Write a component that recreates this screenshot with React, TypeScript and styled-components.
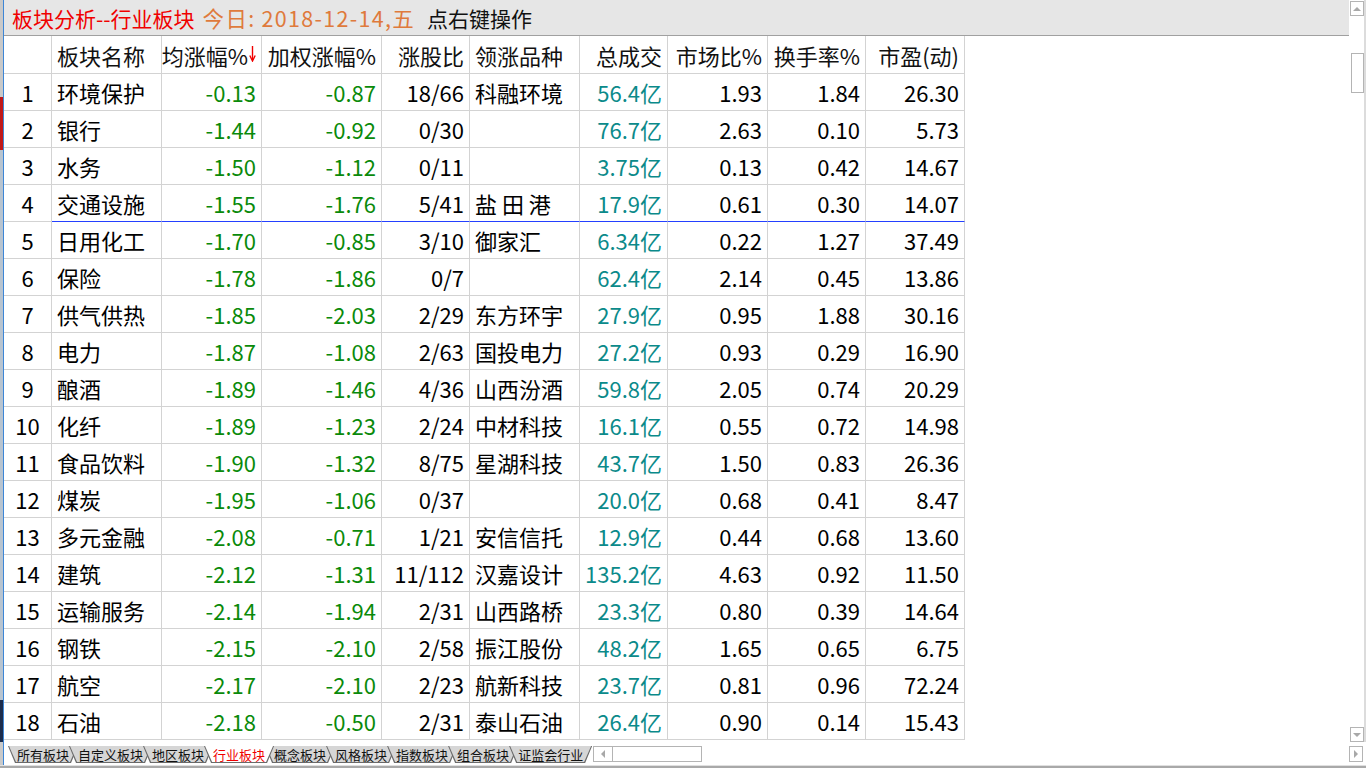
import React from "react"
import styled, { createGlobalStyle } from "styled-components"

const Global = createGlobalStyle`
  html, body { margin: 0; padding: 0; background: #fff; }
  body { font-family: "Noto Sans CJK SC", "Noto Sans", sans-serif; }
`

const COLS = "48px 110px 100px 120px 88px 110px 88px 100px 98px 99px"

const rows: string[][] = [
  ["1", "环境保护", "-0.13", "-0.87", "18/66", "科融环境", "56.4亿", "1.93", "1.84", "26.30"],
  ["2", "银行", "-1.44", "-0.92", "0/30", "", "76.7亿", "2.63", "0.10", "5.73"],
  ["3", "水务", "-1.50", "-1.12", "0/11", "", "3.75亿", "0.13", "0.42", "14.67"],
  ["4", "交通设施", "-1.55", "-1.76", "5/41", "盐 田 港", "17.9亿", "0.61", "0.30", "14.07"],
  ["5", "日用化工", "-1.70", "-0.85", "3/10", "御家汇", "6.34亿", "0.22", "1.27", "37.49"],
  ["6", "保险", "-1.78", "-1.86", "0/7", "", "62.4亿", "2.14", "0.45", "13.86"],
  ["7", "供气供热", "-1.85", "-2.03", "2/29", "东方环宇", "27.9亿", "0.95", "1.88", "30.16"],
  ["8", "电力", "-1.87", "-1.08", "2/63", "国投电力", "27.2亿", "0.93", "0.29", "16.90"],
  ["9", "酿酒", "-1.89", "-1.46", "4/36", "山西汾酒", "59.8亿", "2.05", "0.74", "20.29"],
  ["10", "化纤", "-1.89", "-1.23", "2/24", "中材科技", "16.1亿", "0.55", "0.72", "14.98"],
  ["11", "食品饮料", "-1.90", "-1.32", "8/75", "星湖科技", "43.7亿", "1.50", "0.83", "26.36"],
  ["12", "煤炭", "-1.95", "-1.06", "0/37", "", "20.0亿", "0.68", "0.41", "8.47"],
  ["13", "多元金融", "-2.08", "-0.71", "1/21", "安信信托", "12.9亿", "0.44", "0.68", "13.60"],
  ["14", "建筑", "-2.12", "-1.31", "11/112", "汉嘉设计", "135.2亿", "4.63", "0.92", "11.50"],
  ["15", "运输服务", "-2.14", "-1.94", "2/31", "山西路桥", "23.3亿", "0.80", "0.39", "14.64"],
  ["16", "钢铁", "-2.15", "-2.10", "2/58", "振江股份", "48.2亿", "1.65", "0.65", "6.75"],
  ["17", "航空", "-2.17", "-2.10", "2/23", "航新科技", "23.7亿", "0.81", "0.96", "72.24"],
  ["18", "石油", "-2.18", "-0.50", "2/31", "泰山石油", "26.4亿", "0.90", "0.14", "15.43"],
]

const headers = ["", "板块名称", "均涨幅%", "加权涨幅%", "涨股比", "领涨品种", "总成交", "市场比%", "换手率%", "市盈(动)"]
const aligns = ["center", "left", "right", "right", "right", "left", "right", "right", "right", "right"]
const colors = ["#000", "#000", "#0a8a0a", "#0a8a0a", "#000", "#000", "#0b8a8a", "#000", "#000", "#000"]

const tabs = ["所有板块", "自定义板块", "地区板块", "行业板块", "概念板块", "风格板块", "指数板块", "组合板块", "证监会行业"]

const Screen = styled.div`
  width: 1366px;
  height: 768px;
  display: flex;
  flex-direction: column;
  overflow: hidden;
  background: #fff;
  border-bottom: 2px solid #a9a9a9;
  box-sizing: border-box;
`

const Upper = styled.div`
  display: flex;
  height: 742px;
`

const LeftStrip = styled.div`
  width: 3px;
  flex: none;
  border-right: 1px solid #3d86d6;
  background: linear-gradient(
    to bottom,
    #c9c9c9 0,
    #c9c9c9 97px,
    #c01818 97px,
    #c01818 150px,
    #b8c4d0 150px,
    #b8c4d0 700px,
    #1c2c4c 700px
  );
`

const Main = styled.div`
  flex: 1;
  display: flex;
  flex-direction: column;
  min-width: 0;
`

const TitleBar = styled.div`
  height: 35px;
  background: #e6e6e6;
  border-bottom: 1px solid #a0a0a0;
  display: flex;
  align-items: center;
  padding-left: 8px;
  font-size: 21px;
  white-space: pre;
`

const TitleText = styled.span<{ $c: string; $wide?: boolean }>`
  color: ${(p) => p.$c};
  margin-right: ${(p) => (p.$wide ? "12px" : "8px")};
  letter-spacing: ${(p) => (p.$wide ? "1.3px" : "0")};
  font-size: ${(p) => (p.$wide ? "21.5px" : "inherit")};
`

const Grid = styled.div`
  display: grid;
  grid-template-columns: ${COLS};
  width: 961px;
`

const Cell = styled.div<{ $align: string; $color: string; $h: number; $sel?: boolean }>`
  height: ${(p) => p.$h}px;
  box-sizing: border-box;
  border-right: 1px solid #d3d3d3;
  border-bottom: 1px solid ${(p) => (p.$sel ? "#2440ff" : "#d3d3d3")};
  display: flex;
  align-items: center;
  justify-content: ${(p) => (p.$align === "left" ? "flex-start" : p.$align === "right" ? "flex-end" : "center")};
  padding: 0 5px 0 5px;
  font-size: 22px;
  color: ${(p) => p.$color};
  white-space: pre;
  overflow: hidden;
`

const SortArrow = styled.svg`
  width: 7px;
  height: 17px;
  margin-left: 1px;
  align-self: flex-start;
  margin-top: 9px;
  flex: none;
`

const VScroll = styled.div`
  width: 17px;
  flex: none;
  border-right: 2px solid #dcdcdc;
  box-sizing: border-box;
  display: flex;
  flex-direction: column;
  align-items: flex-start;
  padding: 1px 0 0 1px;
`

const ArrowBox = styled.div`
  width: 14px;
  height: 15px;
  box-sizing: border-box;
  border: 1px solid #b4b4b4;
  background: #fff;
  display: flex;
  align-items: center;
  justify-content: center;
  flex: none;
`

const Thumb = styled.div`
  width: 13px;
  height: 40px;
  margin: 37px 0 0 1px;
  box-sizing: border-box;
  border: 1px solid #b4b4b4;
  background: #fff;
`

const Spacer = styled.div`
  flex: 1;
`

const BottomBar = styled.div`
  height: 24px;
  display: flex;
  align-items: flex-start;
  border-bottom: 1px solid #e0e0e0;
  box-sizing: border-box;
`

const TabRow = styled.div`
  display: flex;
  margin-top: 4px;
  padding-left: 4px;
`

const Tab = styled.div<{ $active?: boolean }>`
  position: relative;
  height: 17px;
  margin-right: -9px;
  padding: 0 9px;
  background: #6a6a6a;
  clip-path: polygon(0 0, 100% 0, calc(100% - 7px) 100%, 7px 100%);
  z-index: ${(p) => (p.$active ? 2 : 1)};
  font-size: 13px;
  line-height: 17px;
  color: ${(p) => (p.$active ? "#f00000" : "#111")};
  &::before {
    content: "";
    position: absolute;
    inset: 0 1px 1px 1px;
    background: ${(p) => (p.$active ? "#fff" : "#d6d6d6")};
    clip-path: polygon(0 0, 100% 0, calc(100% - 7px) 100%, 7px 100%);
    z-index: -1;
  }
`

const TabLabel = styled.span`
  position: relative;
`

const HScroll = styled.div`
  margin: 4px 0 0 10px;
  width: 109px;
  height: 16px;
  box-sizing: border-box;
  border: 1px solid #b4b4b4;
  display: flex;
`

const HArrowCell = styled.div`
  width: 18px;
  border-right: 1px solid #b4b4b4;
  display: flex;
  align-items: center;
  justify-content: center;
`

const RightBox = styled(ArrowBox)`
  margin: 4px 3px 0 0;
  height: 16px;
`

function Tri({ dir }: { dir: "up" | "down" | "left" | "right" }) {
  const pts = {
    up: "0,5 4,1 8,5",
    down: "0,1 8,1 4,5",
    left: "5,0 5,8 1,4",
    right: "1,0 1,8 5,4",
  }[dir]
  const w = dir === "up" || dir === "down" ? 8 : 6
  const h = dir === "up" || dir === "down" ? 6 : 8
  return (
    <svg width={w} height={h} viewBox={`0 0 ${w} ${h}`}>
      <polygon points={pts} fill="#a8a8a8" />
    </svg>
  )
}

export default function App() {
  return (
    <>
      <Global />
      <Screen>
        <Upper>
          <LeftStrip />
          <Main>
            <TitleBar>
              <TitleText $c="#f00000">板块分析--行业板块</TitleText>
              <TitleText $c="#df7a3c" $wide>今日: 2018-12-14,五</TitleText>
              <TitleText $c="#111">点右键操作</TitleText>
            </TitleBar>
            <Grid>
              {headers.map((h, i) => (
                <Cell key={"h" + i} $align={aligns[i]} $color="#111" $h={38}>
                  {h}
                  {i === 2 && (
                    <SortArrow viewBox="0 0 7 17">
                      <line x1="3.5" y1="1" x2="3.5" y2="15" stroke="#f00000" strokeWidth="1.4" />
                      <polyline points="0.8,10.5 3.5,16 6.2,10.5" fill="none" stroke="#f00000" strokeWidth="1.4" />
                    </SortArrow>
                  )}
                </Cell>
              ))}
              {rows.map((r, ri) =>
                r.map((v, ci) => (
                  <Cell
                    key={ri + "-" + ci}
                    $align={aligns[ci]}
                    $color={colors[ci]}
                    $h={37}
                    $sel={ri === 3 && ci > 0}
                  >
                    {v}
                  </Cell>
                ))
              )}
            </Grid>
          </Main>
          <VScroll>
            <ArrowBox>
              <Tri dir="up" />
            </ArrowBox>
            <Thumb />
            <Spacer />
            <ArrowBox>
              <Tri dir="down" />
            </ArrowBox>
          </VScroll>
        </Upper>
        <BottomBar>
          <LeftStrip style={{ height: "100%" }} />
          <TabRow>
            {tabs.map((t) => (
              <Tab key={t} $active={t === "行业板块"}>
                <TabLabel>{t}</TabLabel>
              </Tab>
            ))}
          </TabRow>
          <HScroll>
            <HArrowCell>
              <Tri dir="left" />
            </HArrowCell>
          </HScroll>
          <Spacer />
          <RightBox>
            <Tri dir="right" />
          </RightBox>
        </BottomBar>
      </Screen>
    </>
  )
}
